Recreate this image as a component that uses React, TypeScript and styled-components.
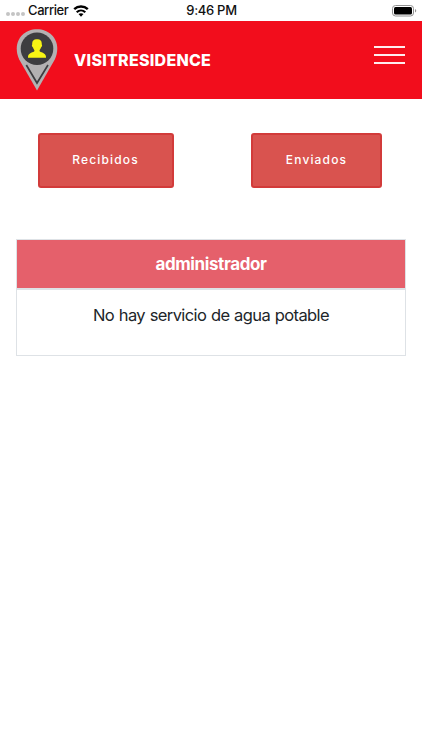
import React from 'react';
import styled, { createGlobalStyle } from 'styled-components';

const GlobalStyle = createGlobalStyle`
  * { box-sizing: border-box; }
  body { margin: 0; background: #fff; font-family: Inter, "Liberation Sans", sans-serif; }
`;

const Screen = styled.div`
  height: 750px;
  display: flex;
  flex-direction: column;
  background: #fff;
`;

const StatusBar = styled.div`
  height: 21px;
  display: grid;
  grid-template-columns: 1fr auto 1fr;
  align-items: center;
  padding: 0 5px 0 6px;
  font-size: 13px;
  line-height: 21px;
  color: #111;
`;

const Carrier = styled.div`
  display: flex;
  align-items: center;
  height: 21px;
`;

const Signal = styled.div`
  display: flex;
  gap: 1px;
  width: 22px;
  padding-top: 7px;
`;

const Dot = styled.i`
  width: 4px;
  height: 4px;
  border-radius: 50%;
  background: #c4c4c4;
`;

const CarrierName = styled.span`
  width: 45px;
  letter-spacing: -0.4px;
  font-weight: 500;
  white-space: nowrap;
`;

const Clock = styled.span`
  font-weight: 500;
  letter-spacing: -0.3px;
`;

const Battery = styled.svg`
  justify-self: end;
`;

const Header = styled.header`
  height: 78px;
  display: flex;
  align-items: center;
  padding: 0 17px 0 16px;
  background: #f20d1c;
`;

const Brand = styled.h1`
  flex: 1;
  margin: -1px 0 0 16px;
  font-size: 16px;
  font-weight: 800;
  letter-spacing: 0.25px;
  color: #fff;
`;

const MenuButton = styled.button`
  width: 31px;
  margin-top: -10px;
  padding: 0;
  border: 0;
  background: none;
  display: flex;
  flex-direction: column;
  gap: 6px;
`;

const MenuLine = styled.span`
  height: 2px;
  background: #ffecee;
`;

const Actions = styled.div`
  display: flex;
  justify-content: space-between;
  padding: 33.5px 40px 0 37.5px;
`;

const ActionButton = styled.button<{ $width: number }>`
  width: ${(p) => p.$width}px;
  height: 55px;
  padding: 0 0 1px;
  border: 2px solid #d23b3a;
  border-radius: 3px;
  background: #d9534f;
  color: #fff;
  font-family: Inter, sans-serif;
  font-size: 12px;
  font-weight: 500;
  letter-spacing: 1.15px;
`;

const Message = styled.section`
  margin: 51px 16px 0;
  border: 1px solid #dee2e6;
  text-align: center;
`;

const Sender = styled.h2`
  height: 50px;
  margin: 0;
  border-bottom: 2px solid #dee2e6;
  background: #e5606b;
  color: #fff;
  font-size: 17px;
  font-weight: 700;
  letter-spacing: -0.4px;
  line-height: 49px;
`;

const Body = styled.p`
  height: 65px;
  margin: 0;
  font-size: 16.5px;
  line-height: 51px;
  letter-spacing: -0.6px;
  word-spacing: 0.6px;
  color: #212529;
`;

const Wifi = () => (
  <svg width="16" height="12" viewBox="0 0 16 12" fill="none" stroke="#000">
    <path d="M1.2 4.1C5 .55 11 .55 14.8 4.1" strokeWidth="2.4" />
    <path d="M3.7 7.2C6.2 4.9 9.8 4.9 12.3 7.2" strokeWidth="2.2" />
    <path d="M5.5 9.1C6.9 7.8 9.1 7.8 10.5 9.1L8 11.7Z" fill="#000" stroke="none" />
  </svg>
);

const Logo = () => (
  <svg width="42" height="64" viewBox="0 0 42 64">
    <path d="M21 62.5L3.2 31.5C-4.2 15 6 1.3 21 1.3S46.2 15 38.8 31.5Z" fill="#b3b1b2" />
    <circle cx="21" cy="20.8" r="16.3" fill="#3d3d40" />
    <path d="M10.3 37L21 55L32 37" fill="none" stroke="#3d3d40" strokeWidth="1.7" />
    <path d="M16.2 16.5C16 12.5 18 11.2 21 11.2S26 12.5 25.8 16.5C26.8 17.8 25.4 19 25 19.5C24.6 21 23.6 21.7 23.5 23C24 24.7 29.8 24.2 30 28.8V29.7H12V28.8C12.2 24.2 18 24.7 18.5 23C18.4 21.7 17.4 21 17 19.5C16.6 19 15.2 17.8 16.2 16.5Z" fill="#f8f514" />
  </svg>
);

export default function App() {
  return (
    <>
      <GlobalStyle />
      <Screen>
        <StatusBar>
          <Carrier>
            <Signal><Dot /><Dot /><Dot /><Dot /></Signal>
            <CarrierName>Carrier</CarrierName>
            <Wifi />
          </Carrier>
          <Clock>9:46 PM</Clock>
          <Battery width="25" height="12" viewBox="0 0 25 12">
            <rect x=".5" y=".5" width="21" height="10.5" rx="3" fill="#fff" stroke="#929292" />
            <rect x="2" y="2" width="18" height="7.5" rx="1.5" fill="#000" />
            <path d="M23 4C24.7 4.5 24.7 7 23 7.5Z" fill="#929292" />
          </Battery>
        </StatusBar>
        <Header>
          <Logo />
          <Brand>VISITRESIDENCE</Brand>
          <MenuButton aria-label="Menú"><MenuLine /><MenuLine /><MenuLine /></MenuButton>
        </Header>
        <Actions>
          <ActionButton $width={136}>Recibidos</ActionButton>
          <ActionButton $width={131}>Enviados</ActionButton>
        </Actions>
        <Message>
          <Sender>administrador</Sender>
          <Body>No hay servicio de agua potable</Body>
        </Message>
      </Screen>
    </>
  );
}
